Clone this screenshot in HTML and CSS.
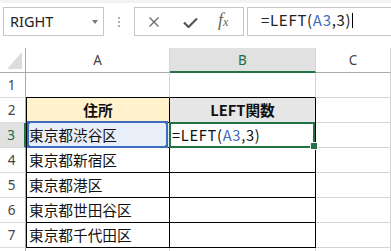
FILE: index.html
```html
<!DOCTYPE html>
<html lang="ja">

<head>
	<meta charset="UTF-8">
	<meta name="viewport"
				content="width=device-width, initial-scale=1.0">
	<title>LEFT関数</title>
	<link rel="stylesheet" href="styles.css">
</head>

<body>
	<div class="formula-bar">
		<div class="name-box">
			<span>RIGHT</span>
			<span class="drop"></span>
		</div>
		<div class="grip"><i></i><i></i><i></i></div>
		<div class="fx-tools">
			<svg class="tool-cancel" width="10" height="10" viewBox="0 0 10 10">
				<path d="M0.5 0.5 L9.5 9.5 M9.5 0.5 L0.5 9.5" stroke="#6a6a6a" stroke-width="1.3" fill="none" />
			</svg>
			<svg class="tool-enter" width="15" height="11" viewBox="0 0 15 11">
				<path d="M1 5.5 L5.5 10 L14 1.5" stroke="#555" stroke-width="2.2" fill="none" />
			</svg>
			<span class="fx">f<span class="fx-x">x</span></span>
		</div>
		<div class="formula-input">
			<span class="formula">=LEFT(<span class="ref">A3</span>,3)</span><span class="caret"></span>
		</div>
	</div>

	<div class="sheet">
		<!-- column headers -->
		<div class="corner">
			<svg width="25" height="24" viewBox="0 0 25 24">
				<polygon points="22,4 22,21 7,21" fill="#dcdcdc" />
			</svg>
		</div>
		<div class="col-head">A</div>
		<div class="col-head current">B</div>
		<div class="col-head">C</div>

		<!-- row 1 -->
		<div class="row-head">1</div>
		<div class="cell above"></div>
		<div class="cell above"></div>
		<div class="cell"></div>

		<!-- row 2 -->
		<div class="row-head">2</div>
		<div class="cell tbl col-a title yellow">住所</div>
		<div class="cell tbl title gray">LEFT関数</div>
		<div class="cell"></div>

		<!-- row 3 -->
		<div class="row-head current">3</div>
		<div class="cell tbl col-a referenced">東京都渋谷区</div>
		<div class="cell tbl active"><span class="formula">=LEFT(<span class="ref">A3</span>,3)</span></div>
		<div class="cell"></div>

		<!-- row 4 -->
		<div class="row-head">4</div>
		<div class="cell tbl col-a">東京都新宿区</div>
		<div class="cell tbl"></div>
		<div class="cell"></div>

		<!-- row 5 -->
		<div class="row-head">5</div>
		<div class="cell tbl col-a">東京都港区</div>
		<div class="cell tbl"></div>
		<div class="cell"></div>

		<!-- row 6 -->
		<div class="row-head">6</div>
		<div class="cell tbl col-a">東京都世田谷区</div>
		<div class="cell tbl"></div>
		<div class="cell"></div>

		<!-- row 7 -->
		<div class="row-head">7</div>
		<div class="cell tbl col-a">東京都千代田区</div>
		<div class="cell tbl"></div>
		<div class="cell"></div>

		<!-- row 8, only its top edge shows -->
		<div class="row-head"></div>
		<div class="cell"></div>
		<div class="cell"></div>
		<div class="cell"></div>
	</div>
</body>

</html>
```

FILE: styles.css
```css
* {
	box-sizing: border-box;
}

body {
	margin: 0;
	width: 391px;
	height: 251px;
	overflow: hidden;
	background-color: #fff;
	font-family: "Noto Sans", sans-serif;
}

/* formula bar */

.formula-bar {
	display: flex;
	align-items: flex-start;
	height: 48px;
	border-top: 3px solid #f3f3f3;
	padding: 4px 0 0 3px;
}

.formula-bar > * {
	flex-shrink: 0;
}

.name-box {
	display: flex;
	align-items: center;
	justify-content: space-between;
	width: 101px;
	height: 29px;
	border: 1px solid #c6c6c6;
	padding: 0 5px 1px 6px;
	font-size: 14.5px;
	color: #222;
}

.drop {
	border-left: 3.5px solid transparent;
	border-right: 3.5px solid transparent;
	border-top: 4px solid #777;
	margin-top: 2px;
}

.grip {
	display: flex;
	flex-direction: column;
	gap: 2px;
	margin: 10px 0 0 14px;
	width: 2px;
}

.grip i {
	display: block;
	width: 2px;
	height: 2px;
	background-color: #b0b0b0;
}

.fx-tools {
	display: flex;
	align-items: center;
	width: 110px;
	height: 29px;
	margin-left: 14px;
	border: 1px solid #c6c6c6;
	padding-left: 14px;
}

.fx-tools > * {
	flex-shrink: 0;
}

.tool-enter {
	margin-left: 24px;
	margin-top: 1px;
}

.fx {
	margin-left: 20px;
	font-family: "Liberation Serif", serif;
	font-style: italic;
	font-size: 18px;
	color: #666;
	margin-top: -2px;
}

.fx-x {
	font-size: 12px;
}

.formula-input {
	display: flex;
	align-items: flex-start;
	width: 160px;
	height: 29px;
	margin-left: 3px;
	border: 1px solid #c6c6c6;
	padding: 2px 0 0 13px;
	font-family: "Noto Sans CJK JP", sans-serif;
	font-size: 15px;
	color: #222;
	line-height: 20px;
}

.caret {
	flex-shrink: 0;
	width: 1px;
	height: 15px;
	margin: 3px 0 0 1px;
	background-color: #000;
}

.formula {
	letter-spacing: 0.7px;
}

.ref {
	color: #3f6cc0;
}

/* sheet grid */

.sheet {
	display: grid;
	grid-template-columns: 26px 144px 146px 75px;
	grid-auto-rows: 25px;
	font-family: "Noto Sans CJK JP", sans-serif;
	font-size: 14.67px;
	color: #111;
}

.corner {
	border-right: 1px solid #ababab;
	border-bottom: 1px solid #ababab;
}

.corner svg {
	display: block;
}

.col-head {
	display: flex;
	align-items: center;
	justify-content: center;
	border-right: 1px solid #d4d4d4;
	border-bottom: 1px solid #ababab;
	font-family: "Noto Sans", sans-serif;
	font-size: 13.5px;
	color: #444;
}

.col-head.current {
	background-color: #e1e1e1;
	border-bottom: 2px solid #217346;
	color: #1e6b41;
}

.row-head {
	display: flex;
	align-items: center;
	justify-content: center;
	border-right: 1px solid #ababab;
	border-bottom: 1px solid #dadada;
	font-family: "Noto Sans", sans-serif;
	font-size: 13.5px;
	color: #444;
	padding-right: 2px;
}

.row-head.current {
	background-color: #e1e1e1;
	border-right: 2px solid #217346;
	color: #1e6b41;
}

.cell {
	position: relative;
	display: flex;
	align-items: center;
	padding: 0 2px 1px;
	border-right: 1px solid #d4d4d4;
	border-bottom: 1px solid #d4d4d4;
	white-space: nowrap;
}

.cell.above {
	border-bottom-color: #000;
}

.cell.tbl {
	border-right-color: #000;
	border-bottom-color: #000;
}

.cell.col-a {
	border-left: 1px solid #000;
}

.cell.title {
	justify-content: center;
	font-weight: bold;
}

.cell.yellow {
	background-color: #fff2cc;
}

.cell.gray {
	background-color: #e7e6e6;
}

/* range referenced by the formula */
.cell.referenced {
	background-color: #e9eff8;
}

.cell.referenced::before {
	content: "";
	position: absolute;
	top: -2px;
	left: 0;
	right: 1px;
	bottom: -1px;
	border: 2px solid #3f6cc0;
	background:
		linear-gradient(#3f6cc0, #3f6cc0) left -2px top -2px / 5px 5px no-repeat,
		linear-gradient(#3f6cc0, #3f6cc0) right -2px top -2px / 5px 5px no-repeat,
		linear-gradient(#3f6cc0, #3f6cc0) left -2px bottom -2px / 5px 5px no-repeat,
		linear-gradient(#3f6cc0, #3f6cc0) right -2px bottom -2px / 5px 5px no-repeat;
	background-origin: border-box;
	z-index: 1;
}

/* active cell */
.cell.active::before {
	content: "";
	position: absolute;
	top: -1px;
	left: -1px;
	right: 0;
	bottom: -1px;
	border: 2px solid #217346;
	z-index: 2;
}

.cell.active::after {
	content: "";
	position: absolute;
	right: -3px;
	bottom: -3px;
	width: 6px;
	height: 6px;
	background-color: #217346;
	border: 1px solid #fff;
	z-index: 3;
}
```
